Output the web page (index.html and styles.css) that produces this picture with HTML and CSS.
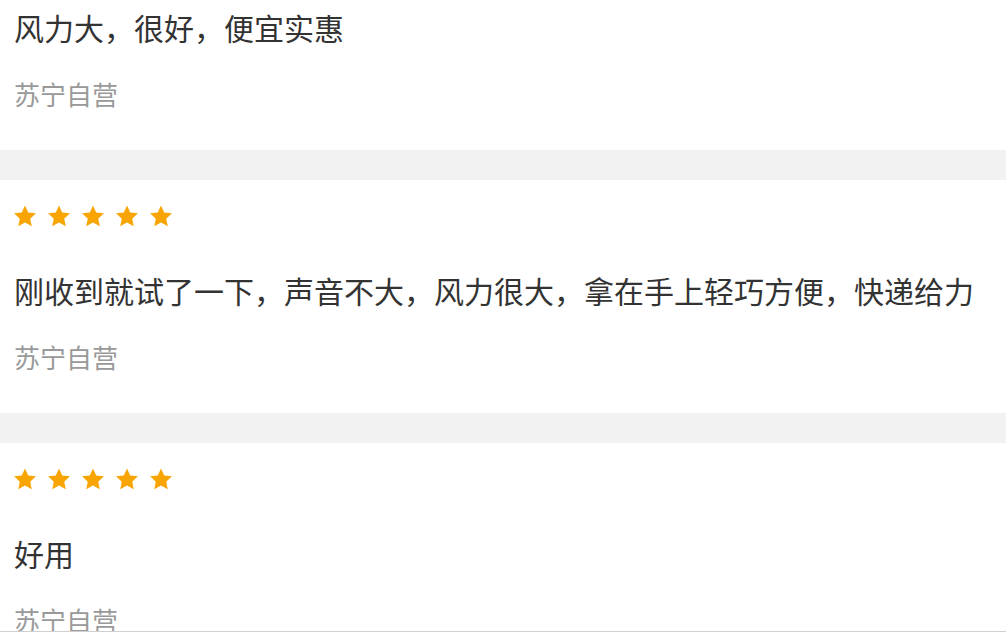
FILE: index.html
```html
<!DOCTYPE html>
<html lang="zh-CN">
<head>
  <meta charset="UTF-8" />
  <meta name="viewport" content="width=device-width, initial-scale=1.0"/>
  <title>商品评价</title>
  <link rel="stylesheet" href="styles.css">
</head>
<body>

  <div class="review-list">
    <div class="review">
      <div class="stars">
        <svg viewBox="0 0 24 24"><path d="M12 .5L15.5 8.2 23.9 9.1 17.7 14.9 19.4 23.1 12 19 4.6 23.1 6.3 14.9 .1 9.1 8.5 8.2z"/></svg>
        <svg viewBox="0 0 24 24"><path d="M12 .5L15.5 8.2 23.9 9.1 17.7 14.9 19.4 23.1 12 19 4.6 23.1 6.3 14.9 .1 9.1 8.5 8.2z"/></svg>
        <svg viewBox="0 0 24 24"><path d="M12 .5L15.5 8.2 23.9 9.1 17.7 14.9 19.4 23.1 12 19 4.6 23.1 6.3 14.9 .1 9.1 8.5 8.2z"/></svg>
        <svg viewBox="0 0 24 24"><path d="M12 .5L15.5 8.2 23.9 9.1 17.7 14.9 19.4 23.1 12 19 4.6 23.1 6.3 14.9 .1 9.1 8.5 8.2z"/></svg>
        <svg viewBox="0 0 24 24"><path d="M12 .5L15.5 8.2 23.9 9.1 17.7 14.9 19.4 23.1 12 19 4.6 23.1 6.3 14.9 .1 9.1 8.5 8.2z"/></svg>
      </div>
      <p class="content">风力大，很好，便宜实惠</p>
      <p class="source">苏宁自营</p>
    </div>

    <div class="review">
      <div class="stars">
        <svg viewBox="0 0 24 24"><path d="M12 .5L15.5 8.2 23.9 9.1 17.7 14.9 19.4 23.1 12 19 4.6 23.1 6.3 14.9 .1 9.1 8.5 8.2z"/></svg>
        <svg viewBox="0 0 24 24"><path d="M12 .5L15.5 8.2 23.9 9.1 17.7 14.9 19.4 23.1 12 19 4.6 23.1 6.3 14.9 .1 9.1 8.5 8.2z"/></svg>
        <svg viewBox="0 0 24 24"><path d="M12 .5L15.5 8.2 23.9 9.1 17.7 14.9 19.4 23.1 12 19 4.6 23.1 6.3 14.9 .1 9.1 8.5 8.2z"/></svg>
        <svg viewBox="0 0 24 24"><path d="M12 .5L15.5 8.2 23.9 9.1 17.7 14.9 19.4 23.1 12 19 4.6 23.1 6.3 14.9 .1 9.1 8.5 8.2z"/></svg>
        <svg viewBox="0 0 24 24"><path d="M12 .5L15.5 8.2 23.9 9.1 17.7 14.9 19.4 23.1 12 19 4.6 23.1 6.3 14.9 .1 9.1 8.5 8.2z"/></svg>
      </div>
      <p class="content">刚收到就试了一下，声音不大，风力很大，拿在手上轻巧方便，快递给力</p>
      <p class="source">苏宁自营</p>
    </div>

    <div class="review">
      <div class="stars">
        <svg viewBox="0 0 24 24"><path d="M12 .5L15.5 8.2 23.9 9.1 17.7 14.9 19.4 23.1 12 19 4.6 23.1 6.3 14.9 .1 9.1 8.5 8.2z"/></svg>
        <svg viewBox="0 0 24 24"><path d="M12 .5L15.5 8.2 23.9 9.1 17.7 14.9 19.4 23.1 12 19 4.6 23.1 6.3 14.9 .1 9.1 8.5 8.2z"/></svg>
        <svg viewBox="0 0 24 24"><path d="M12 .5L15.5 8.2 23.9 9.1 17.7 14.9 19.4 23.1 12 19 4.6 23.1 6.3 14.9 .1 9.1 8.5 8.2z"/></svg>
        <svg viewBox="0 0 24 24"><path d="M12 .5L15.5 8.2 23.9 9.1 17.7 14.9 19.4 23.1 12 19 4.6 23.1 6.3 14.9 .1 9.1 8.5 8.2z"/></svg>
        <svg viewBox="0 0 24 24"><path d="M12 .5L15.5 8.2 23.9 9.1 17.7 14.9 19.4 23.1 12 19 4.6 23.1 6.3 14.9 .1 9.1 8.5 8.2z"/></svg>
      </div>
      <p class="content">好用</p>
      <p class="source">苏宁自营</p>
    </div>
  </div>

  <div class="bottom-bar"></div>

</body>
</html>
```

FILE: styles.css
```css
html, body {
  margin: 0;
  padding: 0;
  background-color: #f2f2f2;
  overflow: hidden;
}
body {
  font-family: "Noto Sans CJK SC", "Noto Sans", sans-serif;
}

/* list is scrolled a little, first card cut at the top */
.review-list {
  margin-top: -83px;
}
.review {
  background-color: #fff;
  padding: 25px 14px 38px 14px;
  margin-bottom: 30px;
}
.stars {
  display: flex;
  gap: 12px;
  height: 22px;
}
.stars svg {
  width: 22px;
  height: 22px;
  fill: #f8a503;
}
.content {
  margin: 43px 0 0 0;
  font-size: 30px;
  line-height: 40px;
  color: #333;
  white-space: nowrap;
}
.source {
  margin: 29px 0 0 0;
  font-size: 26px;
  line-height: 36px;
  color: #999;
}

.bottom-bar {
  position: fixed;
  left: 0;
  right: 0;
  bottom: 0;
  height: 1px;
  background-color: #d0d0d0;
}
```
